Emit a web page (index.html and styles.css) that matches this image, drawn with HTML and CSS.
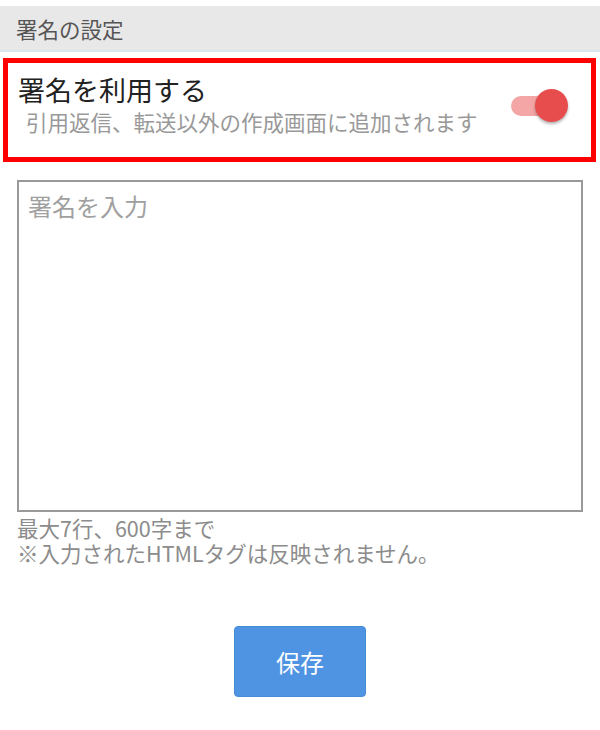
FILE: index.html
```html
<!DOCTYPE html>
<html lang="ja">
<head>
<meta charset="utf-8">
<link rel="stylesheet" href="styles.css">
</head>
<body>
<div class="page">
  <div class="section-head">署名の設定</div>
  <div class="toggle-row">
    <div class="toggle-text">
      <div class="toggle-title">署名を利用する</div>
      <div class="toggle-sub">引用返信、転送以外の作成画面に追加されます</div>
    </div>
    <div class="switch">
      <div class="switch-track"></div>
      <div class="switch-knob"></div>
    </div>
  </div>
  <div class="editor">
    <textarea class="sig-input" placeholder="署名を入力"></textarea>
    <div class="hints">
      <div class="hint">最大7行、600字まで</div>
      <div class="hint">※入力されたHTMLタグは反映されません。</div>
    </div>
  </div>
  <div class="actions">
    <button class="save-btn">保存</button>
  </div>
</div>
</body>
</html>
```
FILE: styles.css
```css
html, body {
  margin: 0;
  padding: 0;
  background: #fff;
}
body {
  font-family: "Noto Sans CJK JP", "Roboto", sans-serif;
}
.page {
  padding-top: 6px;
}
.section-head {
  height: 46px;
  background: #e8e8e8;
  border-bottom: 2px solid #dbe6ec;
  box-sizing: border-box;
  display: flex;
  align-items: center;
  padding-left: 16px;
  font-size: 21.5px;
  color: #555;
}
.toggle-row {
  margin: 6px 4px 0 3px;
  height: 104px;
  border: 5px solid #ff0000;
  box-sizing: border-box;
  display: flex;
  align-items: flex-start;
  justify-content: space-between;
  padding: 10px 22px 0 10px;
}
.toggle-text {
  display: flex;
  flex-direction: column;
}
.toggle-title {
  font-size: 27px;
  line-height: 34px;
  color: #222;
}
.toggle-sub {
  font-size: 21.5px;
  line-height: 30px;
  color: #999;
  padding-left: 8px;
}
.switch {
  position: relative;
  width: 58px;
  height: 34px;
  margin-top: 16px;
}
.switch-track {
  position: absolute;
  left: 0;
  top: 7px;
  width: 44px;
  height: 20px;
  border-radius: 10px;
  background: #f4a5a5;
}
.switch-knob {
  position: absolute;
  left: 24px;
  top: 0;
  width: 33px;
  height: 33px;
  border-radius: 50%;
  background: #e84d4d;
  box-shadow: 0 2px 3px rgba(0,0,0,0.3);
}
.editor {
  padding: 18px 17px 0 17px;
}
.sig-input {
  display: block;
  width: 566px;
  height: 332px;
  box-sizing: border-box;
  border: 2px solid #999;
  border-radius: 0;
  padding: 8px 9px;
  margin: 0;
  font-family: "Noto Sans CJK JP", sans-serif;
  font-size: 24px;
  line-height: 32px;
  color: #333;
  resize: none;
  outline: none;
}
.sig-input::placeholder {
  color: #a0a0a0;
}
.hints {
  margin-top: 3px;
  display: flex;
  flex-direction: column;
}
.hint {
  font-size: 21.5px;
  line-height: 25px;
  color: #8c8c8c;
}
.actions {
  display: flex;
  justify-content: center;
  padding-top: 61px;
}
.save-btn {
  width: 132px;
  height: 71px;
  background: #4f93e3;
  border: 1px solid #4a8bd8;
  border-radius: 4px;
  color: #fff;
  font-family: "Noto Sans CJK JP", sans-serif;
  font-size: 24px;
  padding: 0;
}
```
